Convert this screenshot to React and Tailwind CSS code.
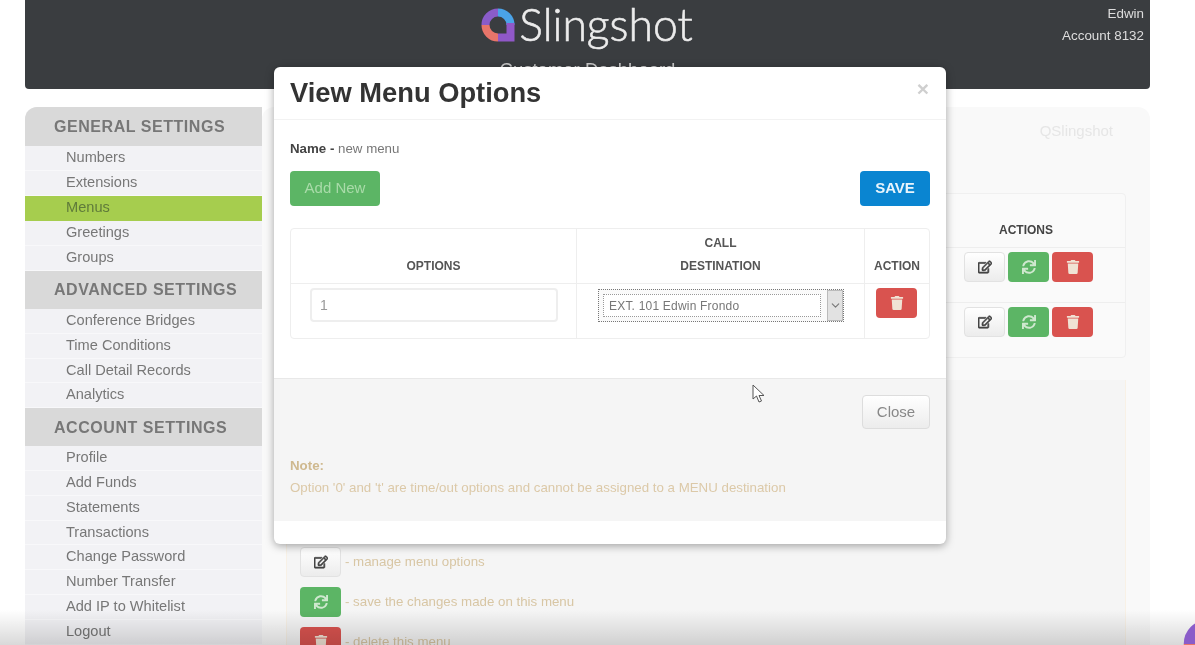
import { FaRegEdit, FaSync, FaTrash } from 'react-icons/fa';
import { ChevronDown } from 'lucide-react';

const sections = [
    { title: 'General Settings', head: 'h-[38.5px]', row: 'h-[25px]', items: ['Numbers', 'Extensions', 'Menus', 'Greetings', 'Groups'] },
    { title: 'Advanced Settings', head: 'h-[38.5px]', row: 'h-[24.8px]', items: ['Conference Bridges', 'Time Conditions', 'Call Detail Records', 'Analytics'] },
    { title: 'Account Settings', head: 'h-[38px]', row: 'h-[24.8px]', items: ['Profile', 'Add Funds', 'Statements', 'Transactions', 'Change Password', 'Number Transfer', 'Add IP to Whitelist', 'Logout'] },
];

function Logo({ className }) {
    return (
        <svg viewBox="0 0 34 34" className={className} fill="none" strokeWidth="8">
            <path d="M4.5 17A12.5 12.5 0 0 1 17 4.5" stroke="#8a5cc9" />
            <path d="M17 4.5A12.5 12.5 0 0 1 29.5 17" stroke="#4aa3e8" />
            <path d="M29.5 15V29.5H17" stroke="#9058c8" />
            <path d="M17 29.5A12.5 12.5 0 0 1 4.5 17" stroke="#e8756a" />
        </svg>
    );
}

function EditBtn() {
    return (
        <div className="w-[41px] h-[30px] rounded border border-[#e2e2e2] bg-gradient-to-b from-white to-[#ececec] flex items-center justify-center text-[#444]">
            <FaRegEdit size={14} stroke="currentColor" strokeWidth={25} />
        </div>
    );
}

function SyncBtn() {
    return (
        <div className="w-[41px] h-[30px] rounded bg-[#5cb565] flex items-center justify-center text-[#cfe8cf]">
            <FaSync size={14} />
        </div>
    );
}

function DeleteBtn() {
    return (
        <div className="w-[41px] h-[30px] rounded bg-[#d9534f] flex items-center justify-center text-[#f0e2d4]">
            <FaTrash size={14} />
        </div>
    );
}

function Sidebar() {
    return (
        <div className="w-[237px] shrink-0 rounded-tl-xl overflow-hidden bg-[#f2f2f5]">
            {sections.map(s => (
                <div key={s.title}>
                    <div className={`${s.head} pl-[29px] pt-[1px] flex items-center bg-[#d9d9d9] text-[#777] font-bold text-[16px] uppercase tracking-[0.55px]`}>
                        {s.title}
                    </div>
                    {s.items.map(item => (
                        <div
                            key={item}
                            className={`${s.row} pl-[41px] flex items-center text-[14.6px] ${item === 'Menus' ? 'bg-[#a6cd4e] text-[#5f7a3a]' : 'text-[#777] border-b border-[#f8f8fa]'}`}
                        >
                            {item}
                        </div>
                    ))}
                </div>
            ))}
        </div>
    );
}

function BackPanel() {
    return (
        <div className="flex-1 h-[560px] rounded-xl bg-[#f9f9f9] pt-[16px] px-[24px]">
            <div className="h-[70px] flex justify-end pr-[13px] text-[#e6e6e6] text-[15px] leading-[16px]">QSlingshot</div>
            <div className="h-[165px] border border-[#f0f0f0] rounded flex flex-col bg-[#fafafa]">
                <div className="h-[54px] shrink-0 flex items-end justify-end border-b border-[#eeeeee]">
                    <div className="w-[198px] pb-[8px] text-center font-bold text-[12px] text-[#444]">ACTIONS</div>
                </div>
                {[0, 1].map(i => (
                    <div key={i} className="h-[55px] shrink-0 flex justify-end pr-[32px] pt-[4px] gap-[3px] border-b border-[#eeeeee] last:border-b-0">
                        <EditBtn />
                        <SyncBtn />
                        <DeleteBtn />
                    </div>
                ))}
            </div>
            <div className="mt-[22px] h-[300px] bg-[#f5f5f5] border-l border-r border-[#f8f1e6] pl-[13px] pt-[162px] text-[13.3px] text-[#d8c6a4]">
                <div className="flex items-center gap-[4px] h-[40px]"><EditBtn /><span>- manage menu options</span></div>
                <div className="flex items-center gap-[4px] h-[40px]"><SyncBtn /><span>- save the changes made on this menu</span></div>
                <div className="flex items-center gap-[4px] h-[40px]"><DeleteBtn /><span>- delete this menu</span></div>
            </div>
        </div>
    );
}

function Modal() {
    return (
        <div className="absolute left-[274px] top-[67px] w-[672px] h-[477px] bg-white rounded-md shadow-[0_2px_8px_rgba(0,0,0,0.35)] flex flex-col">
            <div className="h-[53px] shrink-0 border-b border-[#f2f2f2] pl-[16px] pr-[17px] flex items-center justify-between">
                <div className="text-[27.3px] font-bold text-[#333]">View Menu Options</div>
                <div className="text-[21px] font-bold text-[#cfcfcf] leading-none mb-[10px]">×</div>
            </div>
            <div className="h-[258px] shrink-0 px-[16px] pt-[21px]">
                <div className="text-[13.3px] leading-[16px] text-[#777]"><b className="text-[#444]">Name -</b> new menu</div>
                <div className="mt-[14px] flex justify-between">
                    <div className="w-[90px] h-[35px] rounded bg-[#5cb565] text-[#a9dba9] text-[15px] flex items-center justify-center">Add New</div>
                    <div className="w-[70px] h-[35px] rounded bg-[#0a85d1] text-[#e8f4fc] text-[15px] font-bold flex items-center justify-center">SAVE</div>
                </div>
                <div className="mt-[22px] h-[111px] border border-[#eeeeee] rounded grid grid-cols-[286px_288px_1fr] grid-rows-[55px_1fr] text-[12px] font-bold text-[#555]">
                    <div className="border-b border-r border-[#eeeeee] flex items-end justify-center pb-[8px]">OPTIONS</div>
                    <div className="border-b border-r border-[#eeeeee] flex items-end justify-center pb-[6px] text-center leading-[22.5px]">CALL<br />DESTINATION</div>
                    <div className="border-b border-[#eeeeee] flex items-end justify-center pb-[8px]">ACTION</div>
                    <div className="border-r border-[#eeeeee] pl-[19px] pt-[4px]">
                        <div className="w-[248px] h-[34px] border-2 border-[#eeeeee] rounded pl-[8px] flex items-center font-normal text-[14px] text-[#999]">1</div>
                    </div>
                    <div className="border-r border-[#eeeeee] pl-[21px] pt-[5px]">
                        <div className="w-[246px] h-[33px] border border-dotted border-[#777] flex items-center pl-[4px] bg-[#fafafa]">
                            <div className="w-[218px] h-[23px] border border-dotted border-[#999] bg-white flex items-center pl-[5px] font-normal text-[12px] tracking-[0.2px] text-[#777]">EXT. 101 Edwin Frondo</div>
                            <div className="ml-auto w-[16px] h-[31px] bg-[#e2e2e2] border border-[#bbb] flex items-center justify-center text-[#777]">
                                <ChevronDown size={13} />
                            </div>
                        </div>
                    </div>
                    <div className="pl-[11px] pt-[4px]"><DeleteBtn /></div>
                </div>
            </div>
            <div className="h-[143px] shrink-0 bg-[#f5f5f5] border-t border-[#e8e8e8]">
                <div className="h-[67px] pt-[16px] pr-[16px] flex justify-end">
                    <div className="w-[68px] h-[34px] rounded border border-[#ddd] bg-gradient-to-b from-white to-[#ececec] text-[15px] text-[#888] flex items-center justify-center">Close</div>
                </div>
                <div className="px-[16px] pt-[9px] text-[13.3px] text-[#dcc9a8] leading-[22px]">
                    <div className="font-bold text-[#cfb98f]">Note:</div>
                    <div>Option '0' and 't' are time/out options and cannot be assigned to a MENU destination</div>
                </div>
            </div>
        </div>
    );
}

export default function App() {
    return (
        <div className="relative w-[1195px] h-[645px] overflow-hidden bg-white font-['Liberation_Sans',Arial,sans-serif] blur-[0.4px]">
            <div className="ml-[25px] w-[1125px] h-[89px] rounded-b bg-[#3a3d40] relative flex flex-col items-center text-[#ececec]">
                <div className="flex items-center gap-[4px] h-[52px] mr-[1px]">
                    <Logo className="w-[34px] h-[34px] mb-[3px]" />
                    <span className="font-['Lato',sans-serif] font-light text-[44.5px] leading-[48px] mb-[4px] [-webkit-text-stroke:0.6px_#ececec]">Slingshot</span>
                </div>
                <div className="text-[18.5px] leading-[20px] mt-[8px] text-[#ccc]">Customer Dashboard</div>
                <div className="absolute right-[6px] top-[3px] text-right text-[13.4px] leading-[22px] text-[#ddd]">
                    <div>Edwin</div>
                    <div>Account 8132</div>
                </div>
            </div>
            <div className="ml-[25px] mt-[18px] w-[1125px] flex items-start">
                <Sidebar />
                <BackPanel />
            </div>
            <Modal />
            <svg viewBox="0 0 14 20" className="absolute left-[752px] top-[384px] w-[14px] h-[20px]" fill="white" stroke="#555" strokeWidth="1">
                <path d="M1 1V15L4.5 12L7 18L9.5 17L7 11.5H12Z" />
            </svg>
            <div className="absolute left-0 right-0 bottom-0 h-[35px] bg-gradient-to-b from-transparent to-black/15 pointer-events-none"></div>
            <Logo className="absolute left-[1183px] top-[619px] w-[50px] h-[50px]" />
        </div>
    );
}
